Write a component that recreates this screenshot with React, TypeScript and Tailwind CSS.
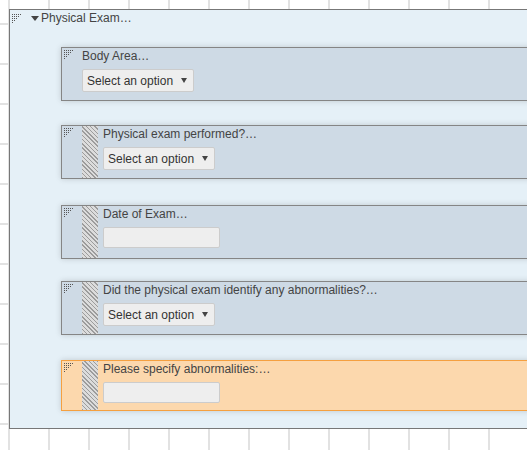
const font = { fontFamily: '"Liberation Sans", Arial, sans-serif' };

function Grip() {
  const dots: [number, number][] = [];
  for (let y = 0; y <= 8; y += 2) {
    for (let x = 0; x <= 8; x += 2) {
      if (x + y <= 8) dots.push([x, y]);
    }
  }
  return (
    <svg width="9" height="9" viewBox="0 0 9 9" className="shrink-0">
      {dots.map(([x, y]) => (
        <rect key={`${x}-${y}`} x={x} y={y} width="1" height="1" fill="#555" />
      ))}
    </svg>
  );
}

function SelectBox() {
  return (
    <div className="mt-[6px] flex h-[23px] w-[112px] items-center justify-between rounded-[2px] border border-[#cccccc] bg-[#eeeeee] pl-[4px] pr-[6px] text-[12px] text-[#333]">
      <span>Select an option</span>
      <svg width="6" height="5" viewBox="0 0 6 5">
        <polygon points="0,0 6,0 3,5" fill="#444" />
      </svg>
    </div>
  );
}

function TextBox() {
  return <div className="mt-[6px] h-[21px] w-[117px] rounded-[2px] border border-[#cccccc] bg-[#eeeeee]" />;
}

type CardProps = {
  label: string;
  control: "select" | "input";
  striped?: boolean;
  highlight?: boolean;
  className?: string;
};

function Card({ label, control, striped = true, highlight = false, className = "" }: CardProps) {
  return (
    <div
      className={`flex w-[620px] border shadow-[0_0_6px_rgba(0,0,0,0.16)] ${
        highlight ? "border-[#f5a040] bg-[#fcd8ad]" : "border-[#858585] bg-[#cedae5]"
      } ${className}`}
    >
      <div className="w-[20px] shrink-0 pl-[2px] pt-[2px]">
        <Grip />
      </div>
      {striped && (
        <div className="w-[16px] shrink-0 [background-image:repeating-linear-gradient(45deg,#9c9c9c_0px,#9c9c9c_1px,#dcdcdc_1px,#dcdcdc_3px)]" />
      )}
      <div className={`flex flex-col ${striped ? "pl-[5px]" : ""} pt-[1px]`}>
        <div className="h-[14px] text-[12px] leading-[14px] text-[#444]">{label}</div>
        {control === "select" ? <SelectBox /> : <TextBox />}
      </div>
    </div>
  );
}

export default function App() {
  return (
    <div
      style={font}
      className="relative h-[450px] w-[527px] overflow-hidden bg-white [background-image:linear-gradient(to_right,#e2e2e2_2px,transparent_2px),linear-gradient(to_bottom,#e2e2e2_2px,transparent_2px)] [background-position:8px_23px] [background-size:40px_40px]"
    >
      <div className="ml-[9px] mt-[9px] h-[420px] w-[640px] border border-[#777] bg-[#e5f0f7] pt-[1px]">
        <div className="flex h-[14px] items-center pl-[2px]">
          <Grip />
          <svg width="8" height="5" viewBox="0 0 8 5" className="ml-[10px]">
            <polygon points="0,0 8,0 4,5" fill="#444" />
          </svg>
          <span className="ml-[2px] text-[12px] leading-[14px] text-[#444]">Physical Exam…</span>
        </div>
        <div className="ml-[51px] flex flex-col">
          <Card className="mt-[22px] h-[54px]" label="Body Area…" control="select" striped={false} />
          <Card className="mt-[24px] h-[54px]" label="Physical exam performed?…" control="select" />
          <Card className="mt-[26px] h-[54px]" label="Date of Exam…" control="input" />
          <Card className="mt-[22px] h-[54px]" label="Did the physical exam identify any abnormalities?…" control="select" />
          <Card className="mt-[25px] h-[51px]" label="Please specify abnormalities:…" control="input" highlight />
        </div>
      </div>
    </div>
  );
}
